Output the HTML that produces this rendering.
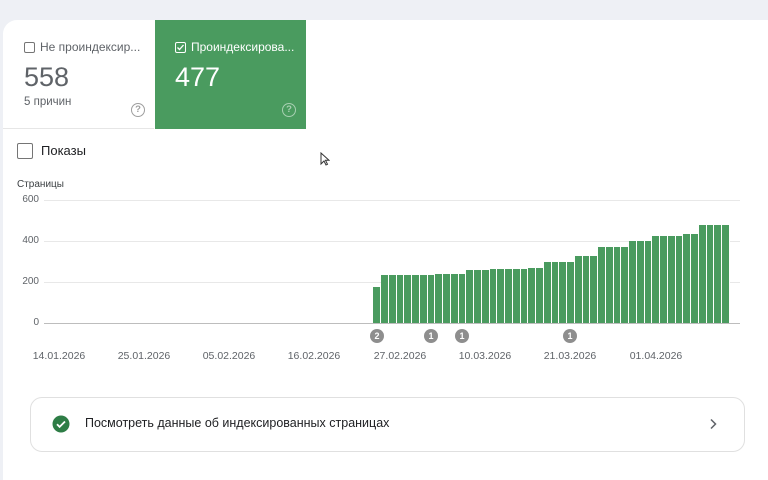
<!DOCTYPE html>
<html><head><meta charset="utf-8"><style>
*{margin:0;padding:0;box-sizing:border-box}
body{width:768px;height:469px;background:#eef0f5;font-family:"Liberation Sans","Noto Sans CJK SC",sans-serif;position:relative;overflow:hidden;color:#3c4043}
.card{position:absolute;left:3px;top:20px;width:770px;height:460px;background:#fff;border-radius:14px 0 0 0}
.a{position:absolute}
.t1{left:3px;top:20px;width:151px;height:109px;border-bottom:1px solid #e6e6e6;border-radius:14px 0 0 0}
.t2{left:155px;top:20px;width:151px;height:109px;background:#4a9b5f}
.cb{position:absolute;width:11px;height:11px;border:1.5px solid #757575;border-radius:2px}
.q{position:absolute;width:14px;height:14px;border:1.5px solid #9e9e9e;border-radius:50%;font-size:9.5px;text-align:center;line-height:11px;color:#9e9e9e;font-weight:bold}
.yl{position:absolute;right:729px;font-size:10px;color:#5f6368}
.gl{position:absolute;left:44px;width:696px;height:1px;background:#e8e8e8}
.dt{position:absolute;top:350px;font-size:10.5px;color:#5f6368;width:70px;text-align:center}
.bd{position:absolute;top:329px;width:14px;height:14px;border-radius:50%;background:#8e8e8e;color:#fff;font-size:9px;font-weight:bold;text-align:center;line-height:14px}
.bar{position:absolute;background:#4a9b5f;border-right:1px solid #fff}
</style></head><body>
<div class="card"></div>
<div class="a t1">
 <div class="cb" style="left:21px;top:22px"></div>
 <div class="a" style="left:37px;top:20px;font-size:12px;color:#5f6368">Не проиндексир...</div>
 <div class="a" style="left:21px;top:42px;font-size:27px;color:#5f6368">558</div>
 <div class="a" style="left:21px;top:76px;font-size:11.5px;color:#5f6368">5 причин</div>
 <div class="q" style="left:128px;top:83px">?</div>
</div>
<div class="a t2">
 <div class="cb" style="left:20px;top:22px;border-color:#fff"><svg width="9" height="9" viewBox="0 0 9 9" style="position:absolute;left:0;top:0"><path d="M1.5 4.5l2 2 4-4.5" stroke="#fff" stroke-width="1.3" fill="none"/></svg></div>
 <div class="a" style="left:36px;top:20px;font-size:12px;color:#fff">Проиндексирова...</div>
 <div class="a" style="left:20px;top:42px;font-size:27px;color:#fff">477</div>
 <div class="q" style="left:127px;top:83px;border-color:#a8d0b2;color:#a8d0b2">?</div>
</div>
<div class="cb" style="left:17px;top:143px;width:16px;height:16px"></div>
<div class="a" style="left:41px;top:143px;font-size:13px;color:#202124">Показы</div>
<svg class="a" style="left:320px;top:152px" width="10" height="14" viewBox="0 0 10 14"><path d="M1 1v11l3-3 2 4 1.5-.7-2-4H9z" fill="#fff" stroke="#333" stroke-width="1"/></svg>
<div class="a" style="left:17px;top:179px;font-size:10px;color:#3c4043">Страницы</div>
<div class="yl" style="top:194px">600</div><div class="gl" style="top:200px"></div>
<div class="yl" style="top:235px">400</div><div class="gl" style="top:241px"></div>
<div class="yl" style="top:276px">200</div><div class="gl" style="top:282px"></div>
<div class="yl" style="top:317px">0</div><div class="gl" style="top:323px;background:#bdbdbd"></div>
<div id="bars"></div>
<div class="dt" style="left:24px">14.01.2026</div>
<div class="dt" style="left:109px">25.01.2026</div>
<div class="dt" style="left:194px">05.02.2026</div>
<div class="dt" style="left:279px">16.02.2026</div>
<div class="dt" style="left:365px">27.02.2026</div>
<div class="dt" style="left:450px">10.03.2026</div>
<div class="dt" style="left:535px">21.03.2026</div>
<div class="dt" style="left:621px">01.04.2026</div>
<div class="bd" style="left:370px">2</div>
<div class="bd" style="left:424px">1</div>
<div class="bd" style="left:455px">1</div>
<div class="bd" style="left:563px">1</div>
<div class="a" style="left:30px;top:397px;width:715px;height:55px;border:1px solid #e0e0e0;border-radius:12px"></div>
<svg class="a" style="left:52px;top:415px" width="18" height="18" viewBox="0 0 18 18"><circle cx="9" cy="9" r="8.5" fill="#2e7d46"/><path d="M5 9.3l2.6 2.6L13 6.5" stroke="#fff" stroke-width="1.8" fill="none"/></svg>
<div class="a" style="left:85px;top:416px;font-size:12.5px;color:#202124">Посмотреть данные об индексированных страницах</div>
<svg class="a" style="left:709px;top:418px" width="8" height="12" viewBox="0 0 8 12"><path d="M2 1.5l4.5 4.5L2 10.5" stroke="#5f6368" stroke-width="1.5" fill="none"/></svg>
<script>
var tops=[287];function add(n,t){for(var i=0;i<n;i++)tops.push(t)}
add(7,275);add(4,273.7);add(3,270);add(5,268.7);add(2,268);add(4,262);add(3,256);add(4,247);add(3,241);add(4,235.7);add(2,234);add(4,224.7);
var h='';for(var i=0;i<tops.length;i++){var x=373.3+i*7.75;h+='<div class="bar" style="left:'+x.toFixed(2)+'px;top:'+tops[i]+'px;width:7.75px;height:'+(323-tops[i])+'px"></div>'}
document.getElementById('bars').innerHTML=h;
</script>
</body></html>
